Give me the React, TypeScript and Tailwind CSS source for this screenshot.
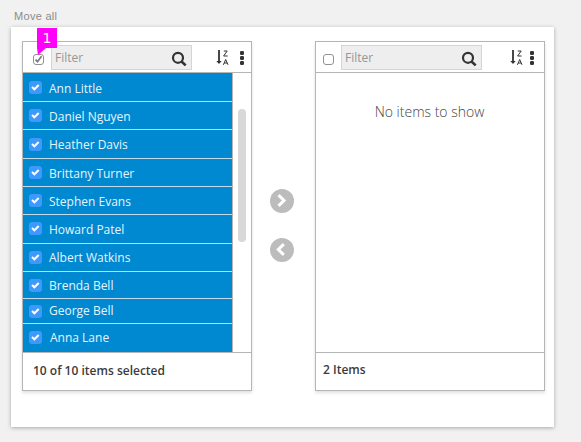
const rows = [
  { name: 'Ann Little', row: 'h-[29px]', box: 'mt-2', text: 'mt-2' },
  { name: 'Daniel Nguyen', row: 'h-7', box: 'mt-[7px]', text: 'mt-[7px]' },
  { name: 'Heather Davis', row: 'h-[29px]', box: 'mt-2', text: 'mt-[7px]' },
  { name: 'Brittany Turner', row: 'h-7', box: 'mt-[7px]', text: 'mt-[7px]' },
  { name: 'Stephen Evans', row: 'h-7', box: 'mt-[7px]', text: 'mt-[7px]' },
  { name: 'Howard Patel', row: 'h-[29px]', box: 'mt-[7px]', text: 'mt-[7px]' },
  { name: 'Albert Watkins', row: 'h-7', box: 'mt-[7px]', text: 'mt-1.5' },
  { name: 'Brenda Bell', row: 'h-[27px]', box: 'mt-[7px]', text: 'mt-1.5' },
  { name: 'George Bell', row: 'h-[25px]', box: 'mt-1.5', text: 'mt-1' },
  { name: 'Anna Lane', row: 'h-7', box: 'mt-[7px]', text: 'mt-1.5' },
];

function Header({ checked }: { checked?: boolean }) {
  return (
    <div className={`flex h-[31px] shrink-0 border-b border-[#b5b5b5] ${checked ? 'pl-[10px]' : 'pl-[7px]'}`}>
      <span className="mt-3 h-[11px] w-[11px] shrink-0 rounded-[3px] border border-[#929292] bg-white">
        {checked && (
          <svg className="block" width="9" height="9" viewBox="0 0 9 9" fill="none" stroke="#7c7c7c" strokeWidth="1.8">
            <path d="M1.5 4.7 3.5 6.7 7.5 1.3" />
          </svg>
        )}
      </span>
      <div className="mt-[3px] ml-[7px] flex h-[25px] w-[141px] shrink-0 items-center justify-between border border-[#d5d5d5] bg-[#eee] pr-1 pl-[3px]">
        <span className="text-[12px] leading-[23px] text-[#969696]">Filter</span>
        <svg className="mt-[2px]" width="16" height="16" viewBox="0 0 16 16" fill="none" stroke="#333">
          <circle cx="7" cy="6.8" r="5" strokeWidth="2.2" />
          <path d="M10.5 10.5 14.7 14.4" strokeWidth="2.6" />
        </svg>
      </div>
      <svg className={`mt-[7px] shrink-0 ${checked ? 'ml-6' : 'ml-7'}`} width="14" height="18" viewBox="0 0 14 18" fill="none" stroke="#333">
        <path d="M3 1V13" strokeWidth="1.8" />
        <path d="M.3 12H5.7L3 15Z" fill="#333" stroke="none" />
        <path d="M7.8 2H11.2L7.6 7H11.6M7.4 15.8 9.7 10.5 12 15.8M8.2 14H11.2" strokeWidth="1" />
      </svg>
      <svg className={`mt-[9px] shrink-0 ${checked ? 'ml-[9px]' : 'ml-[5px]'}`} width="6" height="16" viewBox="0 0 6 16" fill="#333">
        <rect x="1" y="0" width="4" height="4" rx="1.3" />
        <rect x="1" y="5" width="4" height="4" rx="1.3" />
        <rect x="1" y="10" width="4" height="4" rx="1.3" />
      </svg>
    </div>
  );
}

function MoveButton({ left }: { left?: boolean }) {
  return (
    <button className="h-6 w-6 rounded-full bg-[#bcbcbc]" aria-label={left ? 'Move left' : 'Move right'}>
      <svg className="block" width="24" height="24" viewBox="0 0 24 24" fill="none" stroke="#fff" strokeWidth="3">
        <path d={left ? 'M13.8 6.2 8.3 11.5 13.8 16.8' : 'M8.5 6.2 14 11.5 8.5 16.8'} />
      </svg>
    </button>
  );
}

const panel =
  'flex h-[350px] w-[230px] flex-col border border-[#b5b5b5] bg-white shadow-[0_2px_3px_rgba(0,0,0,0.12)]';

export default function App() {
  return (
    <div className="h-[442px] w-[581px] overflow-hidden bg-[#f1f1f1] font-['Open_Sans',sans-serif]">
      <div className="h-[27px] pt-[9px] pl-[14px] font-['Liberation_Sans',sans-serif] text-[11px] leading-[14px] tracking-[0.3px] text-[#8c8c8c]">
        Move all
      </div>
      <div className="relative ml-[11px] flex h-[400px] w-[543px] bg-white pt-[14px] pl-[11px] shadow-[0_1px_4px_rgba(0,0,0,0.3)]">
        <section className={panel}>
          <Header checked />
          <div className="flex h-[279px] shrink-0">
            <div className="w-[210px] border-r border-[#b5b5b5] bg-[#0088d1]">
              {rows.map((r, i) => (
                <div
                  key={r.name}
                  className={`flex items-start pl-[6px] ${r.row} ${i < rows.length - 1 ? 'border-b border-[#c4dce9]' : ''}`}
                >
                  <span className={`h-[13px] w-[13px] shrink-0 rounded-[3px] bg-[#3d99fc] ${r.box}`}>
                    <svg className="block" width="13" height="13" viewBox="0 0 13 13" fill="none" stroke="#fff" strokeWidth="2">
                      <path d="M3 6 5.4 8.3 9.7 4" />
                    </svg>
                  </span>
                  <span className={`text-[12px] leading-4 text-[#e6f5fc] ${r.text} ${i === 9 ? 'ml-2' : 'ml-[7px]'}`}>
                    {r.name}
                  </span>
                </div>
              ))}
            </div>
            <div className="mt-9 ml-[5px] h-[133px] w-2 rounded-full bg-[#d8d8d8]" />
          </div>
          <div className="flex-1 border-t border-[#b5b5b5] pt-[10px] pl-[10px] text-[12px] leading-4 font-semibold text-[#3b3b3b]">
            10 of 10 items selected
          </div>
        </section>
        <div className="ml-[18px] flex w-[45px] flex-col gap-[25px] pt-[148px]">
          <MoveButton />
          <MoveButton left />
        </div>
        <section className={panel}>
          <Header />
          <div className="h-[279px] shrink-0 pt-[29px] pr-px text-center text-[14px] leading-5 font-light text-[#454545]">
            No items to show
          </div>
          <div className="flex-1 border-t border-[#b5b5b5] pt-[9px] pl-[7px] text-[12px] leading-4 font-semibold text-[#3b3b3b]">
            2 Items
          </div>
        </section>
        <div className="absolute top-px left-[26px] h-[27px] w-5">
          <svg className="absolute inset-0" width="20" height="27" viewBox="0 0 20 27" fill="#ff00fa">
            <path d="M0 0H20V20H9L1 27 0 20Z" />
          </svg>
          <span className="relative block text-center font-['DejaVu_Sans',sans-serif] text-[14px] leading-5 text-white">1</span>
        </div>
      </div>
    </div>
  );
}
